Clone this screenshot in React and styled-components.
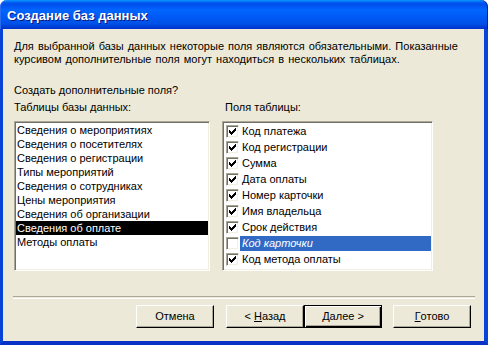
import React from "react";
import styled, { createGlobalStyle } from "styled-components";

const Global = createGlobalStyle`
  html, body { margin: 0; padding: 0; background: #ffffff; }
  body { width: 488px; height: 345px; overflow: hidden; }
`;

const Window = styled.div`
  width: 488px;
  height: 345px;
  display: flex;
  flex-direction: column;
  box-sizing: border-box;
`;

const TitleBar = styled.div`
  height: 29px;
  flex: none;
  display: flex;
  align-items: center;
  padding: 0 0 0 7px;
  box-sizing: border-box;
  border-radius: 7px 7px 0 0;
  background: linear-gradient(
    to bottom,
    #0997ff 0px,
    #0053ee 3px,
    #0050ee 5px,
    #0066ff 10px,
    #0058f3 18px,
    #0050e6 24px,
    #003dd7 27px,
    #0031c8 29px
  );
  box-shadow: inset 1px 0 0 #2a6cf0, inset -1px 0 0 #0020a8;
`;

const Title = styled.span`
  font-family: "Liberation Sans", "DejaVu Sans", sans-serif;
  font-weight: bold;
  font-size: 13px;
  color: #ffffff;
  text-shadow: 1px 1px 0 #0a1883;
  position: relative;
  top: 1px;
`;

const Frame = styled.div`
  flex: 1;
  display: flex;
  border-left: 3px solid #0842d7;
  border-right: 4px solid #0842d7;
  border-bottom: 4px solid #0831c6;
  box-shadow: inset 1px 0 0 #1660ee;
`;

const Client = styled.div`
  flex: 1;
  background: #ece9d8;
  display: flex;
  flex-direction: column;
  padding: 11px 13px 0 11px;
  font-family: "Liberation Sans", "DejaVu Sans", sans-serif;
  font-size: 11px;
  color: #000000;
  line-height: 13px;
`;

const Text = styled.div`
  margin-top: ${(p) => p.$mt || 0}px;
  white-space: nowrap;
  word-spacing: ${(p) => p.$ws || 0}px;
`;

const Columns = styled.div`
  display: grid;
  grid-template-columns: 196px 211px;
  column-gap: 12px;
  margin-top: 4px;
`;

const Column = styled.div`
  display: flex;
  flex-direction: column;
`;

const Label = styled.div`
  height: 13px;
  padding-left: ${(p) => p.$indent || 0}px;
  margin-bottom: 7px;
`;

const ListBox = styled.div`
  height: 150px;
  box-sizing: border-box;
  background: #ffffff;
  border-top: 1px solid #aca899;
  border-left: 1px solid #aca899;
  border-right: 1px solid #ffffff;
  border-bottom: 1px solid #ffffff;
  box-shadow: inset 1px 1px 0 #716f64, inset -1px -1px 0 #f1efe2;
  padding: 1px;
  display: flex;
  flex-direction: column;
  overflow: hidden;
`;

const TableRow = styled.div`
  height: 14px;
  line-height: 14px;
  padding-left: 1px;
  white-space: nowrap;
  background: ${(p) => (p.$selected ? "#000000" : "transparent")};
  color: ${(p) => (p.$selected ? "#ffffff" : "#000000")};
`;

const FieldRow = styled.div`
  height: 16px;
  display: flex;
  align-items: center;
  padding-left: 2px;
`;

const CheckBox = styled.span`
  width: 13px;
  height: 13px;
  box-sizing: border-box;
  flex: none;
  background: #ffffff;
  border-top: 1px solid #aca899;
  border-left: 1px solid #aca899;
  border-right: 1px solid #ffffff;
  border-bottom: 1px solid #ffffff;
  box-shadow: inset 1px 1px 0 #716f64, inset -1px -1px 0 #f1efe2;
  display: flex;
  align-items: center;
  justify-content: center;
`;

const FieldText = styled.span`
  margin-left: 1px;
  height: 15px;
  line-height: 15px;
  flex: ${(p) => (p.$selected ? 1 : "none")};
  padding-left: 2px;
  white-space: nowrap;
  font-style: ${(p) => (p.$italic ? "italic" : "normal")};
  background: ${(p) => (p.$selected ? "#316ac5" : "transparent")};
  color: ${(p) => (p.$selected ? "#ffffff" : "#000000")};
`;

const Separator = styled.div`
  margin-top: 25px;
  margin-left: -1px;
  margin-right: -4px;
  height: 1px;
  border-top: 1px solid #aca899;
  border-bottom: 1px solid #ffffff;
`;

const ButtonRow = styled.div`
  display: flex;
  justify-content: flex-end;
  margin-top: 6px;
`;

const Button = styled.div`
  width: 78px;
  height: 23px;
  box-sizing: border-box;
  margin-left: ${(p) => p.$ml || 0}px;
  background: #ece9d8;
  display: flex;
  align-items: center;
  justify-content: center;
  font-size: 11px;
  border-top: 1px solid ${(p) => (p.$default ? "#000000" : "#ffffff")};
  border-left: 1px solid ${(p) => (p.$default ? "#000000" : "#ffffff")};
  border-right: 1px solid #000000;
  border-bottom: 1px solid #000000;
  box-shadow: ${(p) =>
    p.$default
      ? "inset 1px 1px 0 #ffffff, inset -1px -1px 0 #000000, inset -2px -2px 0 #aca899"
      : "inset -1px -1px 0 #aca899"};
`;

const Key = styled.span`
  text-decoration: underline;
`;

const Check = () => (
  <svg width="7" height="7" viewBox="0 0 7 7">
    <path d="M0 2h1v1h1v1h1v-1h1v-1h1v-1h1v-1h1v3h-1v1h-1v1h-1v1h-1v1h-1v-1h-1v-1h-1z" fill="#000" />
  </svg>
);

const tables = [
  "Сведения о мероприятиях",
  "Сведения о посетителях",
  "Сведения о регистрации",
  "Типы мероприятий",
  "Сведения о сотрудниках",
  "Цены мероприятия",
  "Сведения об организации",
  "Сведения об оплате",
  "Методы оплаты",
];

const fields = [
  { name: "Код платежа", checked: true },
  { name: "Код регистрации", checked: true },
  { name: "Сумма", checked: true },
  { name: "Дата оплаты", checked: true },
  { name: "Номер карточки", checked: true },
  { name: "Имя владельца", checked: true },
  { name: "Срок действия", checked: true },
  { name: "Код карточки", checked: false, italic: true, selected: true },
  { name: "Код метода оплаты", checked: true },
];

export default function App() {
  return (
    <>
      <Global />
      <Window>
        <TitleBar>
          <Title>Создание баз данных</Title>
        </TitleBar>
        <Frame>
          <Client>
            <Text $ws={1}>
              Для выбранной базы данных некоторые поля являются обязательными. Показанные
              <br />
              курсивом дополнительные поля могут находиться в нескольких таблицах.
            </Text>
            <Text $mt={18}>Создать дополнительные поля?</Text>
            <Columns>
              <Column>
                <Label>Таблицы базы данных:</Label>
                <ListBox>
                  {tables.map((t, i) => (
                    <TableRow key={t} $selected={i === 7}>
                      {t}
                    </TableRow>
                  ))}
                </ListBox>
              </Column>
              <Column>
                <Label $indent={3}>Поля таблицы:</Label>
                <ListBox>
                  {fields.map((f) => (
                    <FieldRow key={f.name}>
                      <CheckBox>{f.checked && <Check />}</CheckBox>
                      <FieldText $italic={f.italic} $selected={f.selected}>
                        {f.name}
                      </FieldText>
                    </FieldRow>
                  ))}
                </ListBox>
              </Column>
            </Columns>
            <Separator />
            <ButtonRow>
              <Button>Отмена</Button>
              <Button $ml={12}>
                &lt;&nbsp;<Key>Н</Key>азад
              </Button>
              <Button $default>
                <Key>Д</Key>алее&nbsp;&gt;
              </Button>
              <Button $ml={11}>
                <Key>Г</Key>отово
              </Button>
            </ButtonRow>
          </Client>
        </Frame>
      </Window>
    </>
  );
}
